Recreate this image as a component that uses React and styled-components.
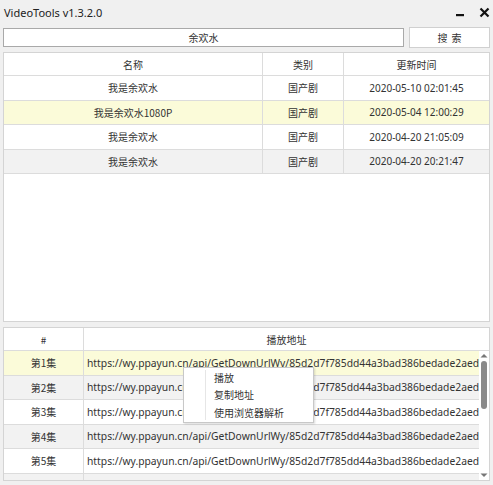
import React from "react";
import styled, { createGlobalStyle } from "styled-components";

const Global = createGlobalStyle`
  html, body { margin: 0; padding: 0; background: #f0f0f0; }
  body { font-family: "Noto Sans CJK SC", "Noto Sans", sans-serif; color: #333; }
  * { box-sizing: border-box; }
`;

const Window = styled.div`
  width: 493px;
  height: 485px;
  background: #f0f0f0;
  display: flex;
  flex-direction: column;
  padding: 0 3px 4px 3px;
  position: relative;
  overflow: hidden;
`;

const TitleBar = styled.div`
  height: 27px;
  display: flex;
  align-items: center;
  justify-content: space-between;
  padding: 0 0 2px 1px;
`;

const Title = styled.div`
  font-family: "Noto Sans", "Noto Sans CJK SC", sans-serif;
  font-size: 11px;
  color: #222;
`;

const Controls = styled.div`
  display: flex;
  align-items: center;
  gap: 12px;
  padding-right: 0;
`;

const CtrlBtn = styled.div`
  width: 12px;
  height: 12px;
  display: flex;
  align-items: center;
  justify-content: center;
`;

const SearchRow = styled.div`
  display: flex;
  align-items: center;
  gap: 5px;
  height: 21px;
`;

const SearchInput = styled.div`
  flex: 1;
  height: 19px;
  background: #fff;
  border: 1px solid #a9a9a9;
  display: flex;
  align-items: center;
  justify-content: center;
  font-size: 10px;
  color: #333;
`;

const SearchButton = styled.div`
  width: 81px;
  height: 21px;
  background: #fff;
  border: 1px solid #d0d0d0;
  display: flex;
  align-items: center;
  justify-content: center;
  font-size: 10px;
  letter-spacing: 4px;
  padding-left: 4px;
  color: #333;
`;

const Panel = styled.div`
  background: #fff;
  border: 1px solid #d4d4d4;
  display: flex;
  flex-direction: column;
  overflow: hidden;
`;

const UpperPanel = styled(Panel)`
  margin-top: 4px;
  height: 270px;
`;

const LowerPanel = styled(Panel)`
  margin-top: 5px;
  flex: 1;
  position: relative;
`;

const UpperGrid = styled.div`
  display: grid;
  grid-template-columns: 259px 81px 1fr;
`;

const Cell = styled.div`
  height: ${p => p.$h || 24.5}px;
  display: flex;
  align-items: center;
  justify-content: ${p => (p.$left ? "flex-start" : "center")};
  padding-left: ${p => (p.$left ? 3 : 0)}px;
  font-size: 10px;
  font-family: ${p =>
    p.$latin
      ? `"Noto Sans", "Noto Sans CJK SC", sans-serif`
      : `"Noto Sans CJK SC", "Noto Sans", sans-serif`};
  color: #333;
  background: ${p =>
    p.$tone === "yellow" ? "#fbfbd9" : p.$tone === "gray" ? "#f2f2f2" : "#fff"};
  border-bottom: 1px solid #dcdcdc;
  border-right: ${p => (p.$last ? "none" : "1px solid #dcdcdc")};
  white-space: nowrap;
  overflow: hidden;
`;

const LowerHeader = styled.div`
  display: grid;
  grid-template-columns: 80px 1fr;
`;

const LowerBody = styled.div`
  flex: 1;
  display: flex;
  overflow: hidden;
`;

const LowerRows = styled.div`
  flex: 1;
  display: grid;
  grid-template-columns: 80px 1fr;
  grid-auto-rows: min-content;
  overflow: hidden;
  min-width: 0;
`;

const Url = styled.span`
  font-family: "Noto Sans", sans-serif;
  font-size: 10.3px;
  color: #333;
`;

const Scrollbar = styled.div`
  width: 10px;
  display: flex;
  flex-direction: column;
  align-items: center;
  background: #fff;
  padding: 2px 0;
`;

const ScrollTrack = styled.div`
  flex: 1;
  width: 100%;
  display: flex;
  flex-direction: column;
  align-items: center;
  padding-top: 3px;
`;

const Thumb = styled.div`
  width: 6px;
  height: 48px;
  border-radius: 3px;
  background: #8a8a8a;
`;

const Menu = styled.div`
  position: absolute;
  left: 179px;
  top: 39px;
  width: 131px;
  height: 56px;
  background: #fff;
  border: 1px solid #c8c8c8;
  box-shadow: 1px 1px 2px rgba(0,0,0,0.15);
  display: flex;
  flex-direction: column;
  justify-content: center;
  padding: 1px 0;
`;

const MenuSep = styled.div`
  position: absolute;
  left: 21px;
  top: 2px;
  bottom: 2px;
  border-left: 1px solid #e6e6e6;
`;

const MenuItem = styled.div`
  height: 17.5px;
  display: flex;
  align-items: center;
  padding-left: 30px;
  font-size: 10px;
  color: #333;
`;

const upperRows = [
  { name: "我是余欢水", cat: "国产剧", time: "2020-05-10 02:01:45", tone: "white" },
  { name: "我是余欢水1080P", cat: "国产剧", time: "2020-05-04 12:00:29", tone: "yellow" },
  { name: "我是余欢水", cat: "国产剧", time: "2020-04-20 21:05:09", tone: "white" },
  { name: "我是余欢水", cat: "国产剧", time: "2020-04-20 20:21:47", tone: "gray" },
];

const url = "https://wy.ppayun.cn/api/GetDownUrlWy/85d2d7f785dd44a3bad386bedade2aed";
const lowerRows = [
  { ep: "第1集", tone: "yellow" },
  { ep: "第2集", tone: "gray" },
  { ep: "第3集", tone: "white" },
  { ep: "第4集", tone: "gray" },
  { ep: "第5集", tone: "white" },
  { ep: "", tone: "gray" },
];

export default function App() {
  return (
    <>
      <Global />
      <Window>
        <TitleBar>
          <Title>VideoTools v1.3.2.0</Title>
          <Controls>
            <CtrlBtn>
              <svg width="10" height="10" viewBox="0 0 10 10">
                <rect x="1" y="6" width="8" height="2.2" fill="#111" />
              </svg>
            </CtrlBtn>
            <CtrlBtn>
              <svg width="11" height="11" viewBox="0 0 11 11">
                <path d="M1.5 1.5 L9.5 9.5 M9.5 1.5 L1.5 9.5" stroke="#111" strokeWidth="2.2" />
              </svg>
            </CtrlBtn>
          </Controls>
        </TitleBar>
        <SearchRow>
          <SearchInput>余欢水</SearchInput>
          <SearchButton>搜索</SearchButton>
        </SearchRow>
        <UpperPanel>
          <UpperGrid>
            <Cell $h={23}>名称</Cell>
            <Cell $h={23}>类别</Cell>
            <Cell $h={23} $last>更新时间</Cell>
            {upperRows.map((r, i) => (
              <React.Fragment key={i}>
                <Cell $tone={r.tone}>{r.name}</Cell>
                <Cell $tone={r.tone}>{r.cat}</Cell>
                <Cell $tone={r.tone} $last $latin>{r.time}</Cell>
              </React.Fragment>
            ))}
          </UpperGrid>
        </UpperPanel>
        <LowerPanel>
          <LowerHeader>
            <Cell $h={23}>#</Cell>
            <Cell $h={23} $last>播放地址</Cell>
          </LowerHeader>
          <LowerBody>
            <LowerRows>
              {lowerRows.map((r, i) => (
                <React.Fragment key={i}>
                  <Cell $tone={r.tone}>{r.ep}</Cell>
                  <Cell $tone={r.tone} $left $last>
                    {r.ep && <Url>{url}</Url>}
                  </Cell>
                </React.Fragment>
              ))}
            </LowerRows>
            <Scrollbar>
              <svg width="8" height="5" viewBox="0 0 8 5">
                <path d="M0.5 4.5 L4 1 L7.5 4.5 Z" fill="#777" />
              </svg>
              <ScrollTrack>
                <Thumb />
              </ScrollTrack>
              <svg width="8" height="5" viewBox="0 0 8 5">
                <path d="M0.5 0.5 L4 4 L7.5 0.5 Z" fill="#777" />
              </svg>
            </Scrollbar>
          </LowerBody>
          <Menu>
            <MenuSep />
            <MenuItem>播放</MenuItem>
            <MenuItem>复制地址</MenuItem>
            <MenuItem>使用浏览器解析</MenuItem>
          </Menu>
        </LowerPanel>
      </Window>
    </>
  );
}
